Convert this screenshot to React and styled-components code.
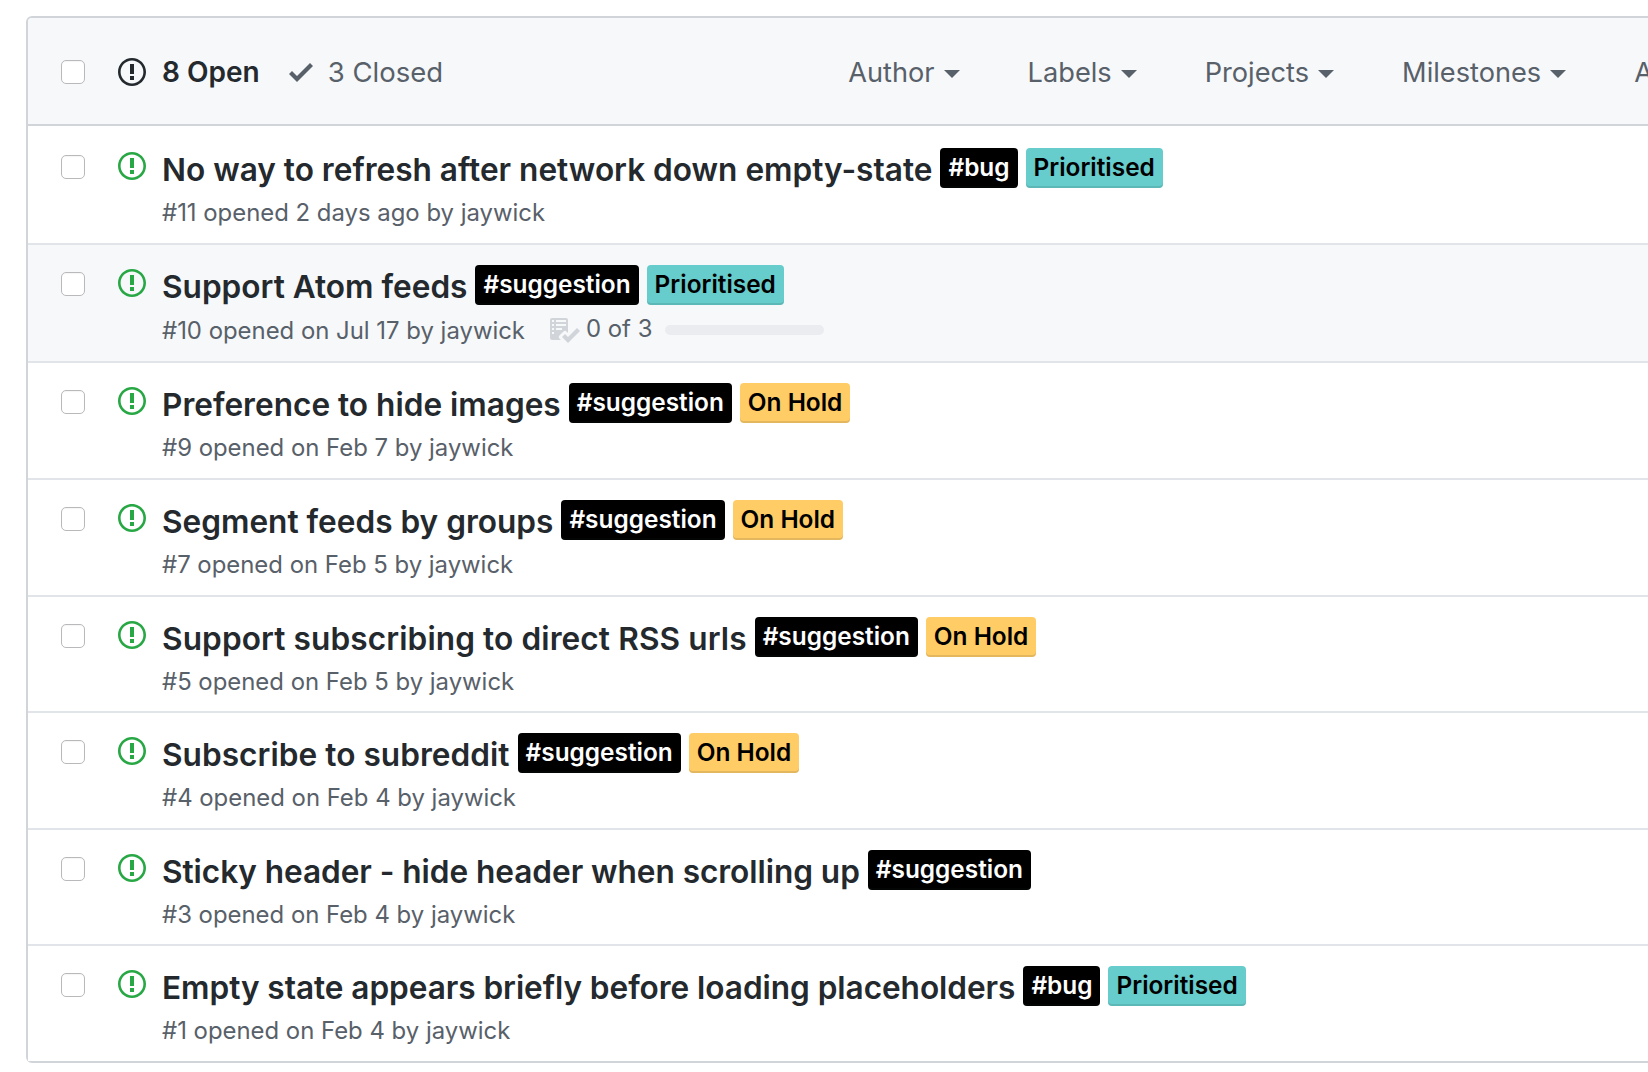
import React from 'react';
import styled, { createGlobalStyle } from 'styled-components';

const Global = createGlobalStyle`
  html, body { margin: 0; padding: 0; background: #fff; overflow: hidden; width: 1648px; height: 1072px; }
  * { box-sizing: border-box; }
`;
const Page = styled.div`
  width: 1648px; height: 1072px; overflow: hidden; padding: 16px 0 0 26px;
  font-family: Inter, "Liberation Sans", sans-serif; color: #24292e;
`;
const Box = styled.div`
  width: 1933px; border: 2px solid #d1d5da; border-radius: 6px;
`;
const Header = styled.div`
  height: 108px; display: flex; align-items: center; padding: 2px 33px 0;
  background: #f6f8fa; border-bottom: 2px solid #d1d5da; border-radius: 4px 4px 0 0;
`;
const Check = styled.span`
  width: 24px; height: 24px; flex: none; border: 1px solid #b9b9bb; border-radius: 5px; background: #fff;
  box-shadow: inset 0 1px 1px rgba(0,0,0,.04);
`;
const States = styled.div`display: flex; align-items: center; margin-left: 33px;`;
const State = styled.span`
  display: flex; align-items: center; gap: ${p => p.$on ? 16 : 15}px; margin-right: 29px;
  font-size: ${p => p.$on ? 28 : 27.5}px;
  font-weight: ${p => p.$on ? 600 : 400}; color: ${p => p.$on ? '#24292e' : '#586069'};
`;
const Filters = styled.div`display: flex; align-items: center; gap: 68px; margin-left: auto;`;
const Filter = styled.span`
  display: flex; align-items: center; gap: 9px; font-size: 27.2px; color: #586069;
`;
const Caret = styled.i`
  width: 0; height: 0; margin-top: 3px; border-style: solid; border-width: 8px 8px 0; border-color: #586069 transparent transparent;
`;
const Meta = styled.div`
  display: flex; align-items: center; margin-top: ${p => p.$tasks ? 9 : 8}px;
  font-size: 23.9px; line-height: 34px; color: #586069; white-space: nowrap;
`;
const Row = styled.div`
  height: ${p => p.$h}px; display: flex; align-items: flex-start; padding: 26px 33px 0;
  background: ${p => p.$hover ? '#f6f8fa' : '#fff'};
  &:not(:last-child) { border-bottom: 2px solid #e1e4e8; }
  ${Header} + & { padding-top: 28px; }
`;
const RowCheck = styled(Check)`margin-top: 1px;`;
const RowIcon = styled.svg`
  width: 28px; height: 32px; flex: none; margin: -4px 16px 0 33px; fill: #28a745;
`;
const Body = styled.div`min-width: 0;`;
const TitleLine = styled.div`display: flex; align-items: flex-start; gap: 8px; height: 40px; margin-top: -6px;`;
const Title = styled.span`
  font-size: 31.6px; font-weight: 600; line-height: 44px; white-space: nowrap;
  letter-spacing: ${p => p.$track || 0}px;
`;
const Label = styled.span`
  height: 40px; padding: 0 8px; border-radius: 4px; font-size: 24.4px; font-weight: 600; line-height: 38px; white-space: nowrap;
  background: ${p => p.$bg}; color: ${p => p.$fg};
  box-shadow: inset 0 -2px 0 rgba(27,31,35,.12);
`;
const Tasks = styled.span`display: flex; align-items: center; margin: -2px 0 0 23px;`;
const TaskIcon = styled.svg`width: 32px; height: 32px; fill: #d1d5da; margin-right: 6px;`;
const TaskCount = styled.span`margin-bottom: 2px;`;
const Progress = styled.span`width: 159px; height: 10px; margin-left: 13px; border-radius: 5px; background: #eaecef;`;
const StateIcon = styled.svg`flex: none; fill: ${p => p.$c};`;

const issue = 'M7 2.3c3.14 0 5.7 2.56 5.7 5.7s-2.56 5.7-5.7 5.7A5.71 5.71 0 011.3 8c0-3.14 2.56-5.7 5.7-5.7zM7 1C3.14 1 0 4.14 0 8s3.14 7 7 7 7-3.14 7-7-3.14-7-7-7zm1 3H6v5h2V4zm0 6H6v2h2v-2z';
const check = 'M12 5l-8 8-4-4 1.5-1.5L4 10l6.5-6.5L12 5z';
const tasklist = 'M16 8.5l-6 6-3-3L8.5 10l1.5 1.5L14.5 7 16 8.5zM5.7 12.2l.8.8H2c-.55 0-1-.45-1-1V3c0-.55.45-1 1-1h7c.55 0 1 .45 1 1v6.5l-.8-.8c-.39-.39-1.03-.39-1.42 0L5.7 10.8a.996.996 0 0 0 0 1.41v-.01zM4 4h5V3H4v1zm0 2h5V5H4v1zm0 2h3V7H4v1zM3 9H2v1h1V9zm0-2H2v1h1V7zm0-2H2v1h1V5zm0-2H2v1h1V3z';

const L = {
  bug: { t: '#bug', bg: '#000', fg: '#fff' },
  sug: { t: '#suggestion', bg: '#000', fg: '#fff' },
  pri: { t: 'Prioritised', bg: '#66cccc', fg: '#000' },
  hold: { t: 'On Hold', bg: '#ffcc66', fg: '#000' },
};
const rows = [
  { title: 'No way to refresh after network down empty-state', labels: ['bug', 'pri'], meta: '#11 opened 2 days ago by jaywick', h: 119 },
  { title: 'Support Atom feeds', labels: ['sug', 'pri'], meta: '#10 opened on Jul 17 by jaywick', tasks: true, hover: true, h: 118 },
  { title: 'Preference to hide images', labels: ['sug', 'hold'], meta: '#9 opened on Feb 7 by jaywick', h: 117 },
  { title: 'Segment feeds by groups', labels: ['sug', 'hold'], meta: '#7 opened on Feb 5 by jaywick', h: 117 },
  { title: 'Support subscribing to direct RSS urls', labels: ['sug', 'hold'], meta: '#5 opened on Feb 5 by jaywick', h: 116, track: 0.1 },
  { title: 'Subscribe to subreddit', labels: ['sug', 'hold'], meta: '#4 opened on Feb 4 by jaywick', h: 117, track: 0.04 },
  { title: 'Sticky header - hide header when scrolling up', labels: ['sug'], meta: '#3 opened on Feb 4 by jaywick', h: 116, track: -0.05 },
  { title: 'Empty state appears briefly before loading placeholders', labels: ['bug', 'pri'], meta: '#1 opened on Feb 4 by jaywick', h: 115, track: -0.055 },
];

export default function App() {
  return (
    <Page>
      <Global />
      <Box>
        <Header>
          <Check />
          <States>
            <State $on>
              <StateIcon $c="#24292e" width="28" height="32" viewBox="0 0 14 16"><path fillRule="evenodd" d={issue} /></StateIcon>
              8 Open
            </State>
            <State>
              <StateIcon $c="#586069" width="24" height="32" viewBox="0 0 12 16"><path fillRule="evenodd" d={check} /></StateIcon>
              3 Closed
            </State>
          </States>
          <Filters>
            {['Author', 'Labels', 'Projects', 'Milestones', 'Assignee', 'Sort'].map(f => (
              <Filter key={f}>{f}<Caret /></Filter>
            ))}
          </Filters>
        </Header>
        {rows.map(r => (
          <Row key={r.title} $hover={r.hover} $h={r.h}>
            <RowCheck />
            <RowIcon viewBox="0 0 14 16"><path fillRule="evenodd" d={issue} /></RowIcon>
            <Body>
              <TitleLine>
                <Title $track={r.track}>{r.title}</Title>
                {r.labels.map(k => <Label key={k} $bg={L[k].bg} $fg={L[k].fg}>{L[k].t}</Label>)}
              </TitleLine>
              <Meta $tasks={r.tasks}>
                {r.meta}
                {r.tasks && (
                  <Tasks>
                    <TaskIcon viewBox="0 0 16 16"><path fillRule="evenodd" d={tasklist} /></TaskIcon>
                    <TaskCount>0 of 3</TaskCount>
                    <Progress />
                  </Tasks>
                )}
              </Meta>
            </Body>
          </Row>
        ))}
      </Box>
    </Page>
  );
}
